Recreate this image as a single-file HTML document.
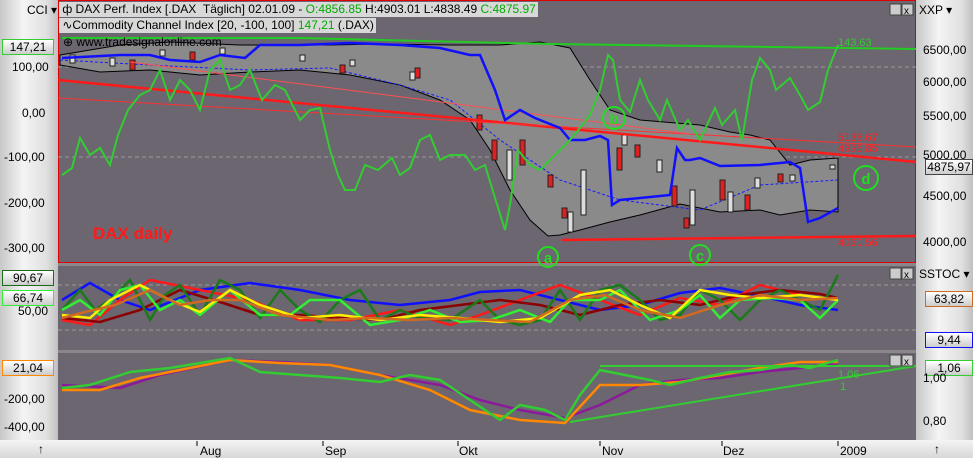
<!DOCTYPE html>
<html><head><meta charset="utf-8"><style>
*{margin:0;padding:0}
body{width:973px;height:458px;overflow:hidden;background:#d8d8d8;font-family:"Liberation Sans",sans-serif;position:relative}
.ax{position:absolute;background:linear-gradient(90deg,#c8c8c8,#f4f4f4 40%,#e0e0e0 80%,#c0c0c0)}
.lbl{position:absolute;font-size:12px;color:#000;white-space:nowrap}
.box{position:absolute;height:14px;font-size:12px;line-height:14px;text-align:center;background:linear-gradient(#fff,#ccc);border:1px solid;}
</style></head><body>
<div class="ax" style="left:0;top:0;width:58px;height:440px"></div>
<div class="ax" style="left:916px;top:0;width:57px;height:440px"></div>
<div style="position:absolute;left:0;top:440px;width:973px;height:18px;background:linear-gradient(#f4f4f4,#d8d8d8)"></div>
<svg width="973" height="458" style="position:absolute;left:0;top:0" font-family="Liberation Sans, sans-serif">
<rect x="58" y="0" width="858" height="440" fill="#6b6670"/>
<rect x="58.5" y="0.5" width="857" height="262" fill="none" stroke="#e00000"/>
<rect x="58" y="263" width="858" height="3" fill="#8a868c"/>
<rect x="58" y="350" width="858" height="3" fill="#8a868c"/>
<g stroke="#999" stroke-dasharray="4,3"><line x1="58" y1="67" x2="916" y2="67"/><line x1="58" y1="157" x2="916" y2="157"/><line x1="58" y1="285" x2="916" y2="285"/><line x1="58" y1="330" x2="916" y2="330"/></g>
<path d="M60,55 L120,45 L170,42 L240,45 L290,45 L330,45 L380,44 L450,45 L500,45 L540,42 L570,48 L590,80 L610,110 L640,120 L700,125 L730,132 L750,135 L770,140 L790,165 L810,160 L838,158 L838,212 L810,210 L780,215 L760,210 L720,212 L700,208 L680,204 L640,215 L610,222 L580,230 L560,235 L548,236 L530,220 L510,190 L490,150 L470,120 L440,100 L400,85 L350,75 L300,70 L250,72 L200,75 L150,70 L100,72 L60,65 Z" fill="#8a8a8a" stroke="#000" stroke-width="1"/>
<path d="M60,60 L150,65 L250,70 L330,68 L400,85 L450,100 L500,140 L560,180 L620,200 L700,210 L760,185 L838,180" fill="none" stroke="#1a1aff" stroke-width="1" stroke-dasharray="3,2"/>
<g fill="#ddd" stroke="#222" stroke-width="1">
<rect x="70" y="55" width="5" height="8"/><rect x="110" y="58" width="5" height="8"/><rect x="160" y="50" width="5" height="6"/><rect x="220" y="48" width="5" height="6"/><rect x="300" y="55" width="5" height="6"/><rect x="350" y="60" width="5" height="6"/><rect x="410" y="72" width="5" height="8"/><rect x="507" y="150" width="5" height="30"/><rect x="568" y="212" width="5" height="20"/><rect x="581" y="170" width="5" height="45"/><rect x="622" y="135" width="5" height="10"/><rect x="657" y="160" width="5" height="12"/><rect x="690" y="190" width="5" height="35"/><rect x="728" y="192" width="5" height="20"/><rect x="755" y="178" width="5" height="10"/><rect x="790" y="175" width="5" height="6"/><rect x="830" y="165" width="5" height="4"/>
</g>
<g fill="#e02020" stroke="#222" stroke-width="1">
<rect x="130" y="60" width="5" height="10"/><rect x="190" y="52" width="5" height="8"/><rect x="340" y="65" width="5" height="8"/><rect x="415" y="68" width="5" height="10"/><rect x="477" y="115" width="5" height="15"/><rect x="492" y="140" width="5" height="20"/><rect x="520" y="140" width="5" height="25"/><rect x="548" y="175" width="5" height="12"/><rect x="562" y="208" width="5" height="10"/><rect x="617" y="148" width="5" height="22"/><rect x="635" y="145" width="5" height="12"/><rect x="672" y="186" width="5" height="20"/><rect x="684" y="218" width="5" height="10"/><rect x="720" y="180" width="5" height="20"/><rect x="745" y="195" width="5" height="15"/><rect x="778" y="174" width="5" height="8"/>
</g>
<line x1="58" y1="80" x2="916" y2="162" stroke="#ff1a1a" stroke-width="2.5"/>
<line x1="58" y1="98" x2="916" y2="147" stroke="#ff3030" stroke-width="1"/>
<line x1="130" y1="62" x2="690" y2="134" stroke="#ff5050" stroke-width="1"/>
<line x1="562" y1="240" x2="916" y2="236" stroke="#ff1a1a" stroke-width="2.5"/>
<polyline points="62,38 300,38 550,44 700,46 916,49" fill="none" stroke="#22cc22" stroke-width="2"/>
<polyline points="62,58 120,55 150,55 170,60 200,62 220,55 245,58 260,45 300,45 350,43 400,45 440,48 470,55 480,55 495,90 505,120 520,110 535,118 560,128 570,140 585,140 600,136 608,140 612,205 620,200 650,197 670,195 677,148 685,160 690,160 700,158 720,166 760,165 790,162 800,168 808,222 820,218 838,208" fill="none" stroke="#1010ff" stroke-width="2.5"/>
<polyline points="62,175 72,168 80,138 90,155 100,148 110,165 118,135 128,110 140,95 150,90 160,70 170,100 180,80 190,90 200,110 210,70 220,60 230,90 240,85 250,70 262,100 275,85 285,90 300,120 310,110 320,108 330,150 338,175 345,190 355,190 365,165 378,170 392,158 400,175 410,168 420,140 430,135 440,160 450,155 465,155 475,170 485,165 495,198 505,230 510,205 518,150 530,165 540,170 550,160 560,150 570,140 580,128 590,115 600,90 608,55 613,60 620,100 630,112 640,80 648,100 660,120 667,100 680,130 688,120 700,140 715,108 722,125 735,110 742,140 752,80 760,58 770,70 776,90 790,78 800,95 808,110 820,102 828,70 838,45" fill="none" stroke="#33cc33" stroke-width="2"/>
<g fill="none" stroke="#22dd22" stroke-width="2"><circle cx="548" cy="257" r="10"/><circle cx="614" cy="118" r="11"/><circle cx="700" cy="255" r="10"/><circle cx="866" cy="178" r="12"/></g>
<g fill="#22dd22" font-weight="bold" font-size="15" text-anchor="middle"><text x="548" y="263">a</text><text x="614" y="124">b</text><text x="700" y="261">c</text><text x="866" y="184">d</text></g>
<text x="93" y="239" fill="#ff1a1a" font-size="17" font-weight="bold">DAX daily</text>
<g font-size="11"><text x="838" y="46" fill="#33cc33">143.63</text><text x="838" y="141" fill="#ff2020">5138.67</text><text x="838" y="152" fill="#ff2020">4996.85</text><text x="838" y="246" fill="#ff2020">4060.56</text><text x="838" y="378" fill="#33cc33">1.06</text><text x="840" y="390" fill="#33cc33">1</text></g>
<text x="63" y="46" fill="#000" font-size="12">⊕ www.tradesignalonline.com</text>
<g fill="none" stroke-width="2.5">
<polyline points="62,300 90,283 120,300 150,310 200,290 250,283 300,290 350,300 400,305 450,300 480,292 520,290 560,300 600,310 640,305 680,293 720,288 760,296 800,305 838,310" stroke="#1010ff"/>
<polyline points="62,320 90,325 120,300 150,280 200,290 250,300 300,320 350,320 400,310 450,325 480,315 520,300 560,285 600,300 640,315 680,298 720,305 760,285 800,295 838,300" stroke="#ff1a1a"/>
<polyline points="62,318 100,322 140,310 180,290 220,302 260,315 300,315 340,318 380,320 420,310 460,305 500,300 540,305 580,315 620,305 660,300 700,305 740,295 780,290 820,294 838,298" stroke="#8b0000"/>
<polyline points="62,310 80,290 95,310 110,300 130,280 150,320 165,295 180,285 200,315 220,280 240,290 260,318 280,290 300,310 320,322 340,300 360,290 380,320 400,310 420,318 450,320 480,300 500,320 520,325 540,320 560,290 580,320 600,290 620,285 640,300 660,320 680,315 700,290 720,300 740,320 760,300 780,290 800,300 820,310 838,275" stroke="#1a7a1a"/>
<polyline points="62,310 80,300 100,315 120,290 140,285 160,310 180,300 200,315 230,290 260,315 290,315 310,300 340,300 370,325 400,320 430,310 460,322 490,320 520,310 550,322 570,300 600,300 620,290 650,320 680,310 700,295 720,318 740,300 770,298 800,300 820,318 838,300" stroke="#33ee33"/>
<polyline points="62,315 90,318 110,300 140,285 170,300 200,312 230,290 260,305 300,318 340,315 380,320 420,315 460,318 500,322 540,318 580,295 610,290 640,305 670,318 700,290 730,295 760,298 800,295 838,300" stroke="#ffee00"/>
<polyline points="62,318 85,312 115,305 150,290 180,305 210,300 240,300 280,315 330,320 370,318 410,320 450,318 490,320 530,322 570,300 605,295 640,310 680,318 720,305 760,295 800,300 838,298" stroke="#d06a20"/>
</g>
<g fill="none" stroke-width="2.5">
<polyline points="62,385 120,388 160,375 230,360 280,362 330,365 380,375 440,385 480,400 520,410 565,418 600,405 640,385 680,380 720,378 760,372 800,368 838,363" stroke="#8b1a9a"/>
<polyline points="62,390 100,390 140,378 230,360 280,363 330,365 380,375 430,390 470,410 520,420 565,423 600,385 640,385 680,382 720,375 760,368 800,362 838,362" stroke="#ff8800"/>
<polyline points="62,388 90,385 130,372 170,368 230,358 260,372 300,375 340,378 380,382 410,375 440,380 470,400 500,420 520,405 545,410 565,420 580,395 600,370 625,375 650,380 670,385 700,378 730,372 760,370 790,365 810,368 838,360" stroke="#33cc33"/>
<polyline points="600,366 916,366" stroke="#33cc33" stroke-width="2"/>
<polyline points="570,422 916,366" stroke="#33cc33" stroke-width="2"/>
</g>
<g fill="#ccc" stroke="#444"><rect x="890" y="4" width="11" height="11"/><rect x="902" y="4" width="11" height="11"/><rect x="890" y="268" width="11" height="11"/><rect x="902" y="268" width="11" height="11"/><rect x="890" y="355" width="11" height="11"/><rect x="902" y="355" width="11" height="11"/></g>
<g font-size="10" fill="#000"><text x="904" y="14">x</text><text x="904" y="278">x</text><text x="904" y="365">x</text></g>
<g stroke="#000"><line x1="197" y1="441" x2="197" y2="446"/><line x1="323" y1="441" x2="323" y2="446"/><line x1="458" y1="441" x2="458" y2="446"/><line x1="600" y1="441" x2="600" y2="446"/><line x1="722" y1="441" x2="722" y2="446"/><line x1="838" y1="441" x2="838" y2="446"/></g>
</svg>
<div style="position:absolute;left:59px;top:2px;height:15px;background:#d8d8d8;font-size:12px;line-height:15px;white-space:nowrap;padding-right:2px">&nbsp;ф DAX Perf. Index [.DAX &nbsp;Täglich] 02.01.09 - <span style="color:#0a0">O:4856.85</span> H:4903.01 L:4838.49 <span style="color:#0a0">C:4875.97</span></div>
<div style="position:absolute;left:59px;top:18px;height:15px;background:#d8d8d8;font-size:12px;line-height:15px;white-space:nowrap;padding-right:2px">&nbsp;∿Commodity Channel Index [20, -100, 100] <span style="color:#0a0">147,21</span> (.DAX)</div>
<div class="lbl" style="left:27px;top:3px">CCI ▾</div>
<div class="box" style="left:2px;top:39px;width:50px;border-color:#33cc33">147,21</div>
<div class="lbl" style="left:12px;top:60px">100,00</div>
<div class="lbl" style="left:22px;top:106px">0,00</div>
<div class="lbl" style="left:4px;top:150px">-100,00</div>
<div class="lbl" style="left:4px;top:196px">-200,00</div>
<div class="lbl" style="left:4px;top:241px">-300,00</div>
<div class="box" style="left:2px;top:270px;width:50px;border-color:#1a6a1a">90,67</div>
<div class="box" style="left:2px;top:290px;width:50px;border-color:#33ee33">66,74</div>
<div class="lbl" style="left:18px;top:304px">50,00</div>
<div class="box" style="left:2px;top:360px;width:50px;border-color:#ff8800">21,04</div>
<div class="lbl" style="left:4px;top:392px">-200,00</div>
<div class="lbl" style="left:4px;top:420px">-400,00</div>
<div class="lbl" style="left:919px;top:3px">XXP ▾</div>
<div class="lbl" style="left:923px;top:43px">6500,00</div>
<div class="lbl" style="left:923px;top:75px">6000,00</div>
<div class="lbl" style="left:923px;top:109px">5500,00</div>
<div class="lbl" style="left:923px;top:148px">5000,00</div>
<div class="box" style="left:925px;top:159px;width:46px;border-color:#444">4875,97</div>
<div class="lbl" style="left:923px;top:189px">4500,00</div>
<div class="lbl" style="left:923px;top:235px">4000,00</div>
<div class="lbl" style="left:919px;top:267px">SSTOC ▾</div>
<div class="box" style="left:925px;top:291px;width:46px;border-color:#d06a20">63,82</div>
<div class="box" style="left:925px;top:332px;width:46px;border-color:#1010ff">9,44</div>
<div class="box" style="left:925px;top:360px;width:46px;border-color:#33cc33">1,06</div>
<div class="lbl" style="left:923px;top:371px">1,00</div>
<div class="lbl" style="left:923px;top:414px">0,80</div>
<div class="lbl" style="left:200px;top:444px">Aug</div>
<div class="lbl" style="left:325px;top:444px">Sep</div>
<div class="lbl" style="left:459px;top:444px">Okt</div>
<div class="lbl" style="left:602px;top:444px">Nov</div>
<div class="lbl" style="left:723px;top:444px">Dez</div>
<div class="lbl" style="left:840px;top:444px">2009</div>
<div class="lbl" style="left:38px;top:442px">↑</div>
<div class="lbl" style="left:934px;top:442px">↑</div>
</body></html>
